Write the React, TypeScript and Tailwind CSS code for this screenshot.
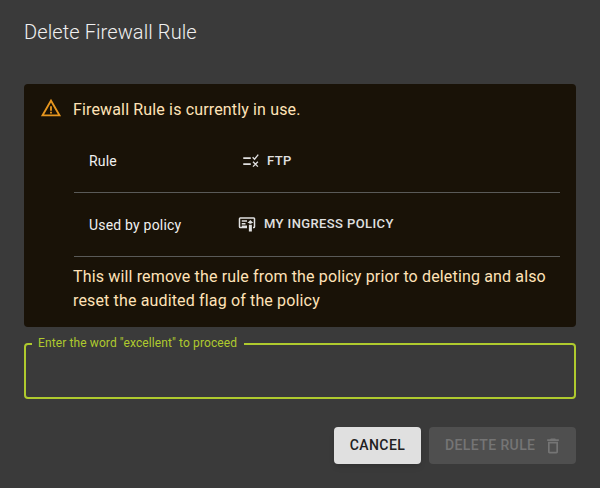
import React from 'react';

function WarningIcon() {
  return (
    <svg viewBox="0 0 24 24" className="w-[22px] h-[22px] fill-[#e6961f]">
      <path d="M12 5.99 19.53 19H4.47L12 5.99M12 2 1 21h22L12 2zm1 14h-2v2h2v-2zm0-6h-2v5h2v-5z" />
    </svg>
  );
}

function RuleIcon() {
  return (
    <svg viewBox="0 0 24 24" className="w-[18px] h-[18px] fill-[#e0e0e0] stroke-[#e0e0e0]">
      <path stroke="none" d="M3 7h10v2.2H3zM3 15h10v2.2H3z" />
      <path fill="none" strokeWidth="1.8" d="M15.5 7l2.6 2.6L23 3.5M16 13l6.5 6.5M22.5 13L16 19.5" />
    </svg>
  );
}

function PolicyIcon() {
  return (
    <svg viewBox="0 0 24 24" className="w-[18px] h-[18px] fill-[#e0e0e0]">
      <path d="M3 3h18a2 2 0 0 1 2 2v10.5a2 2 0 0 1-2 2h-1v-2h1V5H3v10.5h9v2H3a2 2 0 0 1-2-2V5a2 2 0 0 1 2-2z" />
      <path d="M5 7h7v2H5zM5 10.5h5v2H5zM5 14h7v2H5z" />
      <path d="M16.5 6.5l4 4h-2.5v1h-3v-1h-2.5zM14.5 13h4v9h-4z" />
    </svg>
  );
}

function TrashIcon() {
  return (
    <svg viewBox="0 0 24 24" className="w-[20px] h-[20px] fill-[#757575]">
      <path d="M16 9v10H8V9h8m-1.5-6h-5l-1 1H5v2h14V4h-3.5l-1-1zM18 7H6v12c0 1.1.9 2 2 2h8c1.1 0 2-.9 2-2V7z" />
    </svg>
  );
}

export default function App() {
  return (
    <div className="w-[600px] h-[488px] overflow-hidden bg-[#3a3a3a] font-['Roboto',sans-serif] flex flex-col">
      <h2 className="px-6 pt-4 pb-4 h-[84px] text-[20px] leading-[32px] font-light tracking-[0.1px] text-[#f0f0f0]">
        Delete Firewall Rule
      </h2>

      <div className="px-6">
        <div className="h-[243px] bg-[#191207] rounded flex px-4 pt-[13px] gap-[11px] text-[#ffe2b7]">
          <div className="shrink-0">
            <WarningIcon />
          </div>
          <div className="flex-1">
            <p className="text-[16px] leading-[24px] tracking-[0.15px] pt-[1px]">Firewall Rule is currently in use.</p>

            <div className="mt-[7px] ml-[1px] h-[64px] border-b border-[#5a5a58] flex items-center pl-[15px] text-[14px] tracking-[0.2px] text-[#f0f0f0]">
              <span className="w-[152px] pt-[2px]">Rule</span>
              <div className="flex items-center gap-[8px] font-medium text-[13px] tracking-[0.4px] uppercase text-[#e0e0e0]">
                <RuleIcon />
                FTP
              </div>
            </div>

            <div className="ml-[1px] h-[64px] border-b border-[#5a5a58] flex items-center pl-[15px] text-[14px] tracking-[0.2px] text-[#f0f0f0]">
              <span className="w-[149px] pt-[2px]">Used by policy</span>
              <div className="flex items-center gap-[8px] font-medium text-[13px] tracking-[0.4px] uppercase text-[#e0e0e0] -mt-[2px]">
                <PolicyIcon />
                My Ingress Policy
              </div>
            </div>

            <p className="text-[16px] leading-[24px] tracking-[0.15px] mt-[8px]">
              This will remove the rule from the policy prior to deleting and also reset the audited flag of the policy
            </p>
          </div>
        </div>

        <fieldset className="mt-[9px] h-[63px] border-2 border-[#afca2e] rounded pl-[6px] m-0">
          <legend className="pl-[6px] pr-[7px] text-[12px] leading-[15px] tracking-[0.11px] text-[#afca2e]">
            Enter the word "excellent" to proceed
          </legend>
        </fieldset>

        <div className="mt-[28px] flex justify-end gap-2">
          <button className="w-[87px] h-[37px] rounded bg-[#e0e0e0] shadow-md text-[14px] font-medium tracking-[0.4px] text-[#212121]">
            CANCEL
          </button>
          <button
            disabled
            className="w-[147px] h-[37px] rounded bg-[#4f4f4f] flex items-center pl-4 gap-2 text-[14px] font-medium tracking-[0.4px] text-[#757575]"
          >
            DELETE RULE
            <TrashIcon />
          </button>
        </div>
      </div>
    </div>
  );
}
